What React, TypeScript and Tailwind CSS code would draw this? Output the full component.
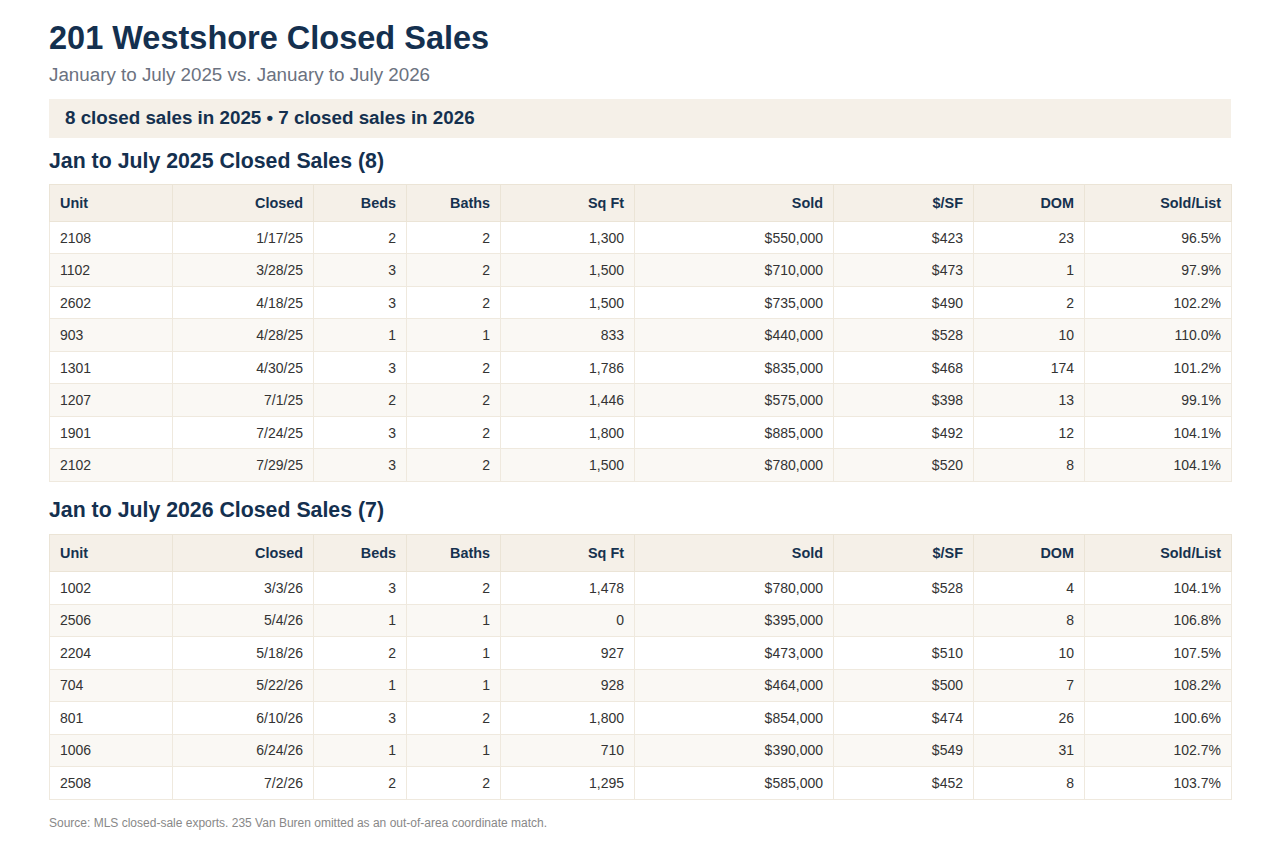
import React from 'react'

type Row = [string, string, string, string, string, string, string, string, string]

const sales2025: Row[] = [
    ['2108', '1/17/25', '2', '2', '1,300', '$550,000', '$423', '23', '96.5%'],
    ['1102', '3/28/25', '3', '2', '1,500', '$710,000', '$473', '1', '97.9%'],
    ['2602', '4/18/25', '3', '2', '1,500', '$735,000', '$490', '2', '102.2%'],
    ['903', '4/28/25', '1', '1', '833', '$440,000', '$528', '10', '110.0%'],
    ['1301', '4/30/25', '3', '2', '1,786', '$835,000', '$468', '174', '101.2%'],
    ['1207', '7/1/25', '2', '2', '1,446', '$575,000', '$398', '13', '99.1%'],
    ['1901', '7/24/25', '3', '2', '1,800', '$885,000', '$492', '12', '104.1%'],
    ['2102', '7/29/25', '3', '2', '1,500', '$780,000', '$520', '8', '104.1%'],
]

const sales2026: Row[] = [
    ['1002', '3/3/26', '3', '2', '1,478', '$780,000', '$528', '4', '104.1%'],
    ['2506', '5/4/26', '1', '1', '0', '$395,000', '', '8', '106.8%'],
    ['2204', '5/18/26', '2', '1', '927', '$473,000', '$510', '10', '107.5%'],
    ['704', '5/22/26', '1', '1', '928', '$464,000', '$500', '7', '108.2%'],
    ['801', '6/10/26', '3', '2', '1,800', '$854,000', '$474', '26', '100.6%'],
    ['1006', '6/24/26', '1', '1', '710', '$390,000', '$549', '31', '102.7%'],
    ['2508', '7/2/26', '2', '2', '1,295', '$585,000', '$452', '8', '103.7%'],
]

const headers = ['Unit', 'Closed', 'Beds', 'Baths', 'Sq Ft', 'Sold', '$/SF', 'DOM', 'Sold/List']

function SalesTable({ rows }: { rows: Row[] }) {
    return (
        <table className="w-full table-fixed border-collapse">
            <colgroup>
                <col className="w-[123px]" />
                <col className="w-[141px]" />
                <col className="w-[93px]" />
                <col className="w-[94px]" />
                <col className="w-[134px]" />
                <col className="w-[199px]" />
                <col className="w-[140px]" />
                <col className="w-[111px]" />
                <col className="w-[147px]" />
            </colgroup>
            <thead>
                <tr className="bg-[#f5f0e8]">
                    {headers.map((h, i) => (
                        <th
                            key={h}
                            className={`border border-[#ebe4d6] px-[10px] py-[10px] text-[14.4px] leading-[16px] font-bold text-[#16324f] ${i === 0 ? 'text-left' : 'text-right'}`}
                        >
                            {h}
                        </th>
                    ))}
                </tr>
            </thead>
            <tbody>
                {rows.map((r, ri) => (
                    <tr key={ri} className={ri % 2 === 1 ? 'bg-[#faf8f4]' : 'bg-white'}>
                        {r.map((c, ci) => (
                            <td
                                key={ci}
                                className={`border border-[#efe9de] px-[10px] py-[7.75px] text-[14px] leading-[16px] text-[#333333] ${ci === 0 ? 'text-left' : 'text-right'}`}
                            >
                                {c}
                            </td>
                        ))}
                    </tr>
                ))}
            </tbody>
        </table>
    )
}

export default function App() {
    return (
        <div className="min-h-[851px] bg-white px-[49px] pt-[19px] pb-6 font-['Liberation_Sans',Arial,sans-serif]">
            <h1 className="text-[32.5px] leading-[38.4px] font-bold text-[#14304f]">201 Westshore Closed Sales</h1>
            <p className="mt-[7px] text-[18.8px] leading-[22.2px] text-[#6b7280]">January to July 2025 vs. January to July 2026</p>

            <div className="mt-[12px] bg-[#f5f0e8] px-4 h-[39px] flex items-center">
                <span className="text-[18.8px] leading-[22px] font-bold text-[#14304f]">8 closed sales in 2025 • 7 closed sales in 2026</span>
            </div>

            <h2 className="mt-[11px] mb-[10px] text-[21.3px] leading-[25.2px] font-bold text-[#14304f]">Jan to July 2025 Closed Sales (8)</h2>
            <SalesTable rows={sales2025} />

            <h2 className="mt-[16px] mb-[11px] text-[21.3px] leading-[25.2px] font-bold text-[#14304f]">Jan to July 2026 Closed Sales (7)</h2>
            <SalesTable rows={sales2026} />

            <p className="mt-[16px] text-[12px] leading-[14px] text-[#888888]">
                Source: MLS closed-sale exports. 235 Van Buren omitted as an out-of-area coordinate match.
            </p>
        </div>
    )
}
